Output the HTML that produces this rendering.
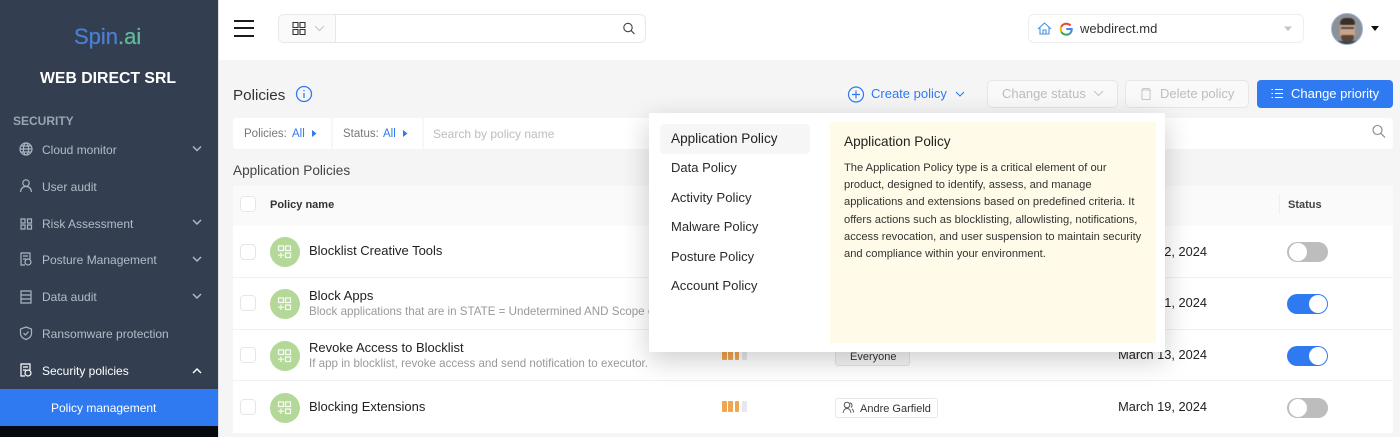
<!DOCTYPE html>
<html><head><meta charset="utf-8"><style>
*{box-sizing:border-box}
html,body{margin:0;padding:0;width:1400px;height:437px;overflow:hidden;background:#f5f5f5;font-family:"Liberation Sans",sans-serif;color:#222}
.a{position:absolute}
.t{position:absolute;white-space:nowrap;line-height:16px}
svg{position:absolute;left:0;top:0;width:1400px;height:437px;overflow:visible;pointer-events:none}
.side{color:#b3bcc8;font-size:12px}
.ic{fill:none;stroke:#aab3bf;stroke-width:1.2}
.chev{fill:none;stroke:#b3bcc8;stroke-width:1.4}
.row{position:absolute;left:233px;width:1160px;background:#fff;border-bottom:1px solid #f1f1f1}
.cb{position:absolute;left:240px;width:16px;height:16px;border:1px solid #e6e6e6;border-radius:4px;background:#fff}
.av{position:absolute;left:270px;width:30px;height:30px;border-radius:50%;background:#b4d898}
.tg{position:absolute;left:1287px;width:41px;height:20px;border-radius:11px}
.tg i{position:absolute;top:1px;width:18px;height:18px;border-radius:50%;background:#fff}
.off{background:#bdbdbd}.off i{left:1.500px}
.on{background:#2f7af0}.on i{left:21.500px}
.bars i{position:absolute;top:0;width:4.500px;height:11px;border-radius:1px;background:#f0a650}
.bars i:last-child{background:#e6e8ee}
.mi{position:absolute;left:671px;font-size:13px;line-height:16px;color:#2a2a2a;white-space:nowrap}
.p{position:absolute;left:844px;font-size:11.150px;line-height:17.200px;color:#333;white-space:nowrap}
</style></head><body>

<!-- sidebar -->
<div class="a" style="left:0;top:0;width:218px;height:437px;background:#333f50"></div>
<div class="a" style="left:218px;top:0;width:1px;height:437px;background:#dfe1e4"></div>
<div class="t" style="left:74px;top:24px;font-size:22px;line-height:26px;color:#4a7fd0;-webkit-text-stroke:.3px #4a7fd0">Spin<span style="color:#5fb89a;-webkit-text-stroke:.3px #5fb89a">.ai</span></div>
<div class="t" style="left:40px;top:70px;font-size:15.800px;line-height:18px;font-weight:bold;color:#fff">WEB DIRECT SRL</div>
<div class="t" style="left:13px;top:113px;font-size:12px;font-weight:bold;color:#9aa4b1">SECURITY</div>

<div class="t side" style="left:42px;top:142px">Cloud monitor</div>
<div class="t side" style="left:42px;top:179px">User audit</div>
<div class="t side" style="left:42px;top:216px">Risk Assessment</div>
<div class="t side" style="left:42px;top:252px">Posture Management</div>
<div class="t side" style="left:42px;top:289px">Data audit</div>
<div class="t side" style="left:42px;top:326px">Ransomware protection</div>
<div class="t" style="left:42px;top:363px;font-size:12px;color:#fff">Security policies</div>
<div class="a" style="left:0;top:389px;width:218px;height:37px;background:#2f7af0"></div>
<div class="t" style="left:51px;top:400px;font-size:12px;color:#fff">Policy management</div>
<div class="a" style="left:0;top:426px;width:218px;height:11px;background:#06090f"></div>

<svg viewBox="0 0 1400 437">
 <g class="ic">
  <circle cx="26" cy="149" r="6"/><ellipse cx="26" cy="149" rx="2.600" ry="6"/><path d="M20 149h12M21 146h10M21 152h10"/>
  <circle cx="26" cy="183" r="3.200"/><path d="M20.500 192c.5-4 2.500-5.500 5.500-5.500s5 1.500 5.500 5.500"/>
  <path d="M21 219h4v4h-4zM27.500 219h4v4h-4zM21 225h4v4h-4zM27.500 225h4v4h-4z"/>
  <path d="M25 265h-4v-12h9v6M23 256h5M23 259h3"/><circle cx="28" cy="262" r="3"/>
  <path d="M21 291h10v12h-10zM21 295h10M21 299h10"/>
  <path d="M26 327l5.500 2v4.500c0 3-2.500 5-5.500 6-3-1-5.500-3-5.500-6v-4.500zM23.500 333l2 2 3-3.500"/>
 </g>
 <g fill="none" stroke="#fff" stroke-width="1.200">
  <path d="M25 376h-4v-12h9v6M23 367h5M23 370h3"/><circle cx="28" cy="373" r="3"/>
 </g>
 <g class="chev">
  <path d="M193 146.500l4 4 4-4M193 220l4 4 4-4M193 257l4 4 4-4M193 294l4 4 4-4"/>
 </g>
 <path d="M193 373l4-4 4 4" fill="none" stroke="#fff" stroke-width="1.400"/>
</svg>

<!-- header -->
<div class="a" style="left:219px;top:0;width:1181px;height:60px;background:#fff"></div>
<div class="a" style="left:234px;top:20px;width:20px;height:2px;background:#1b1b1b"></div>
<div class="a" style="left:234px;top:27px;width:20px;height:2px;background:#1b1b1b"></div>
<div class="a" style="left:234px;top:35px;width:20px;height:2px;background:#1b1b1b"></div>
<div class="a" style="left:278px;top:14px;width:368px;height:29px;border:1px solid #e8e8e8;border-radius:6px;background:#fff"></div>
<div class="a" style="left:279px;top:15px;width:57px;height:27px;border-right:1px solid #e8e8e8;border-radius:6px 0 0 6px;background:#fafafa"></div>
<svg viewBox="0 0 1400 437">
 <path d="M293 22.500h5v5h-5zM300 22.500h5v5h-5zM293 29.500h5v5h-5zM300 29.500h5v5h-5z" fill="none" stroke="#333" stroke-width="1.100"/>
 <path d="M315 26l4.500 4.500 4.500-4.500" fill="none" stroke="#c4c4c4" stroke-width="1"/>
 <circle cx="628" cy="27.500" r="4.200" fill="none" stroke="#444" stroke-width="1.100"/><path d="M631 30.500l3.500 3.500" stroke="#444" stroke-width="1.200"/>
</svg>

<div class="a" style="left:1028px;top:14px;width:276px;height:29px;border:1px solid #eee;border-radius:6px;background:#fff"></div>
<svg viewBox="0 0 1400 437">
 <path d="M1038 29l6.500-6 6.500 6M1040 27.500v6.500h9v-6.500M1043 34v-4h3v4" fill="none" stroke="#4a90e2" stroke-width="1.100"/>
 <path d="M1070.500 25.500a5.800 5.800 0 0 0-9.200 1.200" fill="none" stroke="#e8453c" stroke-width="2"/>
 <path d="M1061.300 26.700a5.800 5.800 0 0 0 0 5" fill="none" stroke="#f4b400" stroke-width="2"/>
 <path d="M1061.300 31.700a5.800 5.800 0 0 0 9 1.400" fill="none" stroke="#34a853" stroke-width="2"/>
 <path d="M1070.300 33.100a5.800 5.800 0 0 0 1.400-4.100h-5.500" fill="none" stroke="#4285f4" stroke-width="2"/>
 <path d="M1284 26.500h8l-4 4.500z" fill="#c4c4c4"/>
 <path d="M1371 26h8l-4 5z" fill="#111"/>
</svg>
<div class="t" style="left:1080px;top:21px;font-size:13px;color:#333">webdirect.md</div>
<div class="a" style="left:1331px;top:13px;width:32px;height:32px;border-radius:50%;background:#8d9299;border:1px solid #9db4d6;overflow:hidden">
 <div style="position:absolute;inset:0;filter:blur(.6px)">
 <div class="a" style="left:8px;top:6px;width:15px;height:21px;border-radius:7px;background:#c9a48a"></div>
 <div class="a" style="left:8px;top:4px;width:15px;height:7px;border-radius:6px 6px 2px 2px;background:#3a2f28"></div>
 <div class="a" style="left:9px;top:21px;width:13px;height:7px;border-radius:2px 2px 6px 6px;background:#5a4638"></div>
 <div class="a" style="left:9px;top:13px;width:13px;height:1.500px;background:#4a4a4a"></div>
 <div class="a" style="left:4px;top:27px;width:23px;height:6px;background:#45464a"></div>
 </div>
</div>

<!-- page header -->
<div class="t" style="left:233px;top:88px;font-size:15.200px;color:#333">Policies</div>
<svg viewBox="0 0 1400 437">
 <circle cx="304" cy="94" r="7.500" fill="none" stroke="#2f7af0" stroke-width="1.300"/>
 <path d="M304 93v5M304 90v1.300" stroke="#2f7af0" stroke-width="1.300" fill="none"/>
 <circle cx="856" cy="94.500" r="7.500" fill="none" stroke="#2f7af0" stroke-width="1.200"/>
 <path d="M852 94.500h8M856 90.500v8" stroke="#2f7af0" stroke-width="1.200"/>
 <path d="M956 92l4 4 4-4" fill="none" stroke="#2f7af0" stroke-width="1.100"/>
</svg>
<div class="t" style="left:871px;top:86px;font-size:13px;color:#2f7af0">Create policy</div>

<div class="a" style="left:987px;top:80px;width:131px;height:28px;border:1px solid #e6e6e6;border-radius:5px;background:#f9f9f9"></div>
<div class="t" style="left:1002px;top:86px;font-size:13px;color:#bdbdbd">Change status</div>
<div class="a" style="left:1125px;top:80px;width:124px;height:28px;border:1px solid #e6e6e6;border-radius:5px;background:#f9f9f9"></div>
<div class="t" style="left:1160px;top:86px;font-size:13px;color:#bdbdbd">Delete policy</div>
<div class="a" style="left:1257px;top:80px;width:136px;height:28px;border-radius:4px;background:#2f7af0"></div>
<div class="t" style="left:1291px;top:86px;font-size:13px;color:#fff">Change priority</div>
<svg viewBox="0 0 1400 437">
 <path d="M1094 91l4.500 4.500 4.500-4.500" fill="none" stroke="#c4c4c4" stroke-width="1"/>
 <path d="M1141 90h10M1143 90v-1.500h6v1.500M1142 90v9.500h8v-9.500" fill="none" stroke="#c8c8c8" stroke-width="1.100"/>
 <path d="M1275 89.500h8M1275 93.500h8M1275 97.500h8" stroke="#fff" stroke-width="1.100"/>
 <path d="M1271.500 89.500h1.500M1271.500 93.500h1.500M1271.500 97.500h1.500" stroke="#fff" stroke-width="1.100"/>
</svg>

<!-- filter bar -->
<div class="a" style="left:233px;top:118px;width:1160px;height:31px;background:#fff;border-radius:4px"></div>
<div class="a" style="left:331px;top:118px;width:2px;height:31px;background:#f7f7f7"></div>
<div class="a" style="left:422px;top:118px;width:2px;height:31px;background:#f7f7f7"></div>
<div class="t" style="left:244px;top:126px;font-size:11.500px;color:#777">Policies:</div>
<div class="t" style="left:292px;top:126px;font-size:11.500px;color:#2f7af0">All</div>
<div class="t" style="left:343px;top:126px;font-size:11.500px;color:#777">Status:</div>
<div class="t" style="left:383px;top:126px;font-size:11.500px;color:#2f7af0">All</div>
<div class="t" style="left:433px;top:126px;font-size:12px;color:#bdbdbd">Search by policy name</div>
<svg viewBox="0 0 1400 437">
 <path d="M312 130l4.500 3.500-4.500 3.500zM403 130l4.500 3.500-4.500 3.500z" fill="#2f7af0"/>
 <circle cx="1377.500" cy="130" r="4.500" fill="none" stroke="#888" stroke-width="1.100"/><path d="M1381 133.500l4 4" stroke="#888" stroke-width="1.200"/>
</svg>

<div class="t" style="left:233px;top:163px;font-size:13.600px;color:#444">Application Policies</div>

<!-- table header -->
<div class="a" style="left:233px;top:186px;width:1160px;height:40px;background:#fafafa"></div>
<div class="cb" style="top:196px"></div>
<div class="t" style="left:270px;top:197px;font-size:11px;font-weight:bold;color:#333">Policy name</div>
<div class="a" style="left:1279px;top:194px;width:1px;height:20px;background:#eee"></div>
<div class="t" style="left:1288px;top:197px;font-size:11px;font-weight:bold;color:#444">Status</div>

<!-- rows -->
<div class="row" style="top:226px;height:52px"></div>
<div class="row" style="top:278px;height:52px"></div>
<div class="row" style="top:330px;height:51px"></div>
<div class="row" style="top:381px;height:52px;border-bottom:0"></div>

<div class="cb" style="top:244px"></div><div class="cb" style="top:295px"></div><div class="cb" style="top:347px"></div><div class="cb" style="top:399px"></div>
<div class="av" style="top:237px"></div><div class="av" style="top:289px"></div><div class="av" style="top:341px"></div><div class="av" style="top:393px"></div>
<svg viewBox="0 0 1400 437">
 <g fill="none" stroke="#fff" stroke-width="1.200" opacity=".9">
  <path d="M278.500 246h5v4.500h-5zM285.500 246h5v4.500h-5zM285.500 253h5v4.500h-5zM278 255.200h6M281 252.500v5.500"/>
  <path d="M278.500 298h5v4.500h-5zM285.500 298h5v4.500h-5zM285.500 305h5v4.500h-5zM278 307.200h6M281 304.500v5.500"/>
  <path d="M278.500 350h5v4.500h-5zM285.500 350h5v4.500h-5zM285.500 357h5v4.500h-5zM278 359.200h6M281 356.500v5.500"/>
  <path d="M278.500 402h5v4.500h-5zM285.500 402h5v4.500h-5zM285.500 409h5v4.500h-5zM278 411.200h6M281 408.500v5.500"/>
 </g>
</svg>
<div class="t" style="left:309px;top:243px;font-size:13px;color:#222">Blocklist Creative Tools</div>
<div class="t" style="left:309px;top:288px;font-size:13px;color:#222">Block Apps</div>
<div class="t" style="left:309px;top:304px;font-size:11.600px;color:#999">Block applications that are in STATE = Undetermined AND Scope of</div>
<div class="t" style="left:309px;top:340px;font-size:13px;color:#222">Revoke Access to Blocklist</div>
<div class="t" style="left:309px;top:356px;font-size:11.600px;color:#999">If app in blocklist, revoke access and send notification to executor.</div>
<div class="t" style="left:309px;top:399px;font-size:13px;color:#222">Blocking Extensions</div>

<div class="a bars" style="left:722px;top:349px;width:24px;height:11px"><i style="left:0"></i><i style="left:6.300px"></i><i style="left:12.600px"></i><i style="left:20px"></i></div>
<div class="a bars" style="left:722px;top:401px;width:24px;height:11px"><i style="left:0"></i><i style="left:6.300px"></i><i style="left:12.600px"></i><i style="left:20px"></i></div>

<div class="a" style="left:835px;top:346px;width:75px;height:20px;background:#f5f5f5;border:1px solid #e4e4e4;border-radius:3px"></div>
<div class="t" style="left:850px;top:349px;font-size:11px;color:#333">Everyone</div>
<div class="a" style="left:835px;top:398px;width:103px;height:20px;background:#fff;border:1px solid #e8e8e8;border-radius:3px"></div>
<div class="t" style="left:860px;top:401px;font-size:11px;color:#333">Andre Garfield</div>
<svg viewBox="0 0 1400 437">
 <circle cx="847" cy="405" r="2.800" fill="none" stroke="#555"/><path d="M843 413c.5-3 2-4.500 4-4.500s3.500 1.500 4 4.500M850 403a2.500 2.500 0 0 1 1 4.500M852 409c1 .8 1.500 2 1.800 3.500" fill="none" stroke="#555" stroke-width=".9"/>
</svg>

<div class="t" style="left:1107px;top:244px;font-size:12.800px;color:#222;width:100px;text-align:right">March 12, 2024</div>
<div class="t" style="left:1107px;top:295px;font-size:12.800px;color:#222;width:100px;text-align:right">March 11, 2024</div>
<div class="t" style="left:1107px;top:347px;font-size:12.800px;color:#222;width:100px;text-align:right">March 13, 2024</div>
<div class="t" style="left:1107px;top:399px;font-size:12.800px;color:#222;width:100px;text-align:right">March 19, 2024</div>

<div class="tg off" style="top:242px"><i></i></div>
<div class="tg on" style="top:294px"><i></i></div>
<div class="tg on" style="top:346px"><i></i></div>
<div class="tg off" style="top:398px"><i></i></div>

<!-- popover -->
<div class="a" style="left:649px;top:113px;width:516px;height:239px;background:#fff;border-radius:2px;box-shadow:0 8px 28px rgba(0,0,0,.2)"></div>
<div class="a" style="left:660px;top:124px;width:150px;height:30px;background:#f6f6f6;border-radius:4px"></div>
<div class="mi" style="top:131px;color:#222;font-size:13.600px">Application Policy</div>
<div class="mi" style="top:160px">Data Policy</div>
<div class="mi" style="top:190px;font-size:13.200px">Activity Policy</div>
<div class="mi" style="top:219px">Malware Policy</div>
<div class="mi" style="top:249px">Posture Policy</div>
<div class="mi" style="top:278px;font-size:13.200px">Account Policy</div>
<div class="a" style="left:830px;top:122px;width:326px;height:221px;background:#fffbe8"></div>
<div class="t" style="left:844px;top:134px;font-size:13.600px;color:#222">Application Policy</div>
<div class="p" style="top:160px">The Application Policy type is a critical element of our<br>product, designed to identify, assess, and manage<br>applications and extensions based on predefined criteria. It<br>offers actions such as blocklisting, allowlisting, notifications,<br>access revocation, and user suspension to maintain security<br>and compliance within your environment.</div>

</body></html>
